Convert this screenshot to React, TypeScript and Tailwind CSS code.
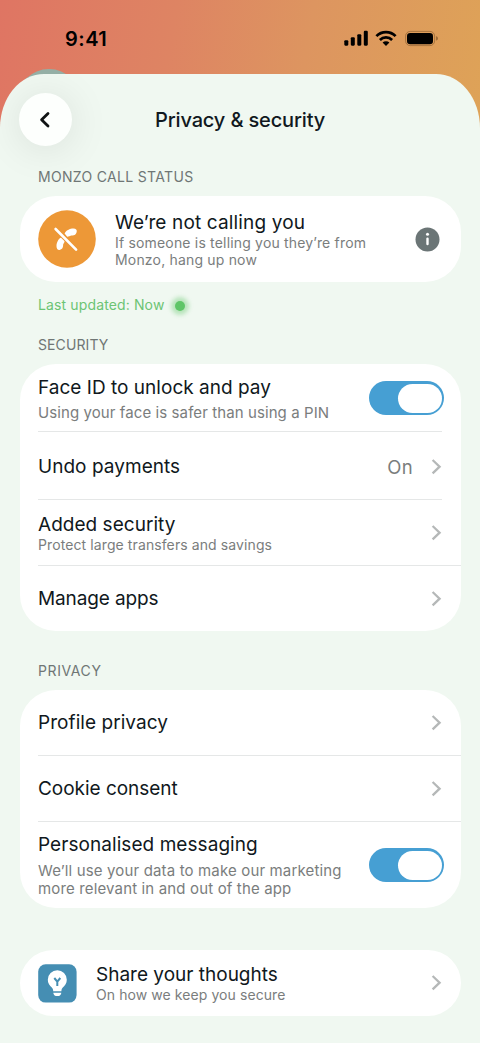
import type { ReactNode } from 'react'

const TITLE = 'text-[19px] text-[#101820] whitespace-nowrap'
const SUB = 'text-[#7a7d7d] whitespace-nowrap'

function StatusBar() {
  return (
    <div className="flex h-[74px] items-start justify-between pl-[65px] pr-[41px] text-black">
      <span className="mt-[26px] text-[20px] font-semibold leading-[26px] tracking-[0.5px]">9:41</span>
      <div className="mt-[30px] flex items-center">
        <svg width="25" height="17" viewBox="0 0 25 17" fill="currentColor">
          <rect x="0.3" y="10.2" width="4" height="5.5" rx="1.1" />
          <rect x="6.8" y="7.2" width="4" height="8.5" rx="1.1" />
          <rect x="13.3" y="4.2" width="4" height="11.5" rx="1.1" />
          <rect x="19.8" y="0.8" width="4" height="14.9" rx="1.1" />
        </svg>
        <svg className="ml-[6px]" width="22" height="17" viewBox="0 0 22 17" fill="none" stroke="currentColor" strokeWidth="2.7">
          <path d="M1.4 6.1A13.4 13.4 0 0 1 20.6 6.1" />
          <path d="M4.9 10A8.6 8.6 0 0 1 17.1 10" />
          <path d="M11 16 7.6 12.6A4.8 4.8 0 0 1 14.4 12.6Z" fill="currentColor" stroke="none" />
        </svg>
        <svg className="ml-[8px]" width="34" height="17" viewBox="0 0 34 17">
          <rect x="0.6" y="1.4" width="29" height="14.2" rx="4.6" fill="none" stroke="#5a3a18" strokeOpacity=".4" />
          <rect x="2" y="3" width="26" height="11.2" rx="3.2" fill="currentColor" />
          <path d="M31.2 6.3v4.2c1.2-.4 1.6-1.2 1.6-2.1s-.4-1.7-1.6-2.1Z" fill="#5a3a18" fillOpacity=".6" />
        </svg>
      </div>
    </div>
  )
}

function SectionLabel({ className, children }: { className: string; children: ReactNode }) {
  return <h2 className={`pl-[38px] text-[14px] leading-5 text-[#6f7675] ${className}`}>{children}</h2>
}

function Card({ className, children }: { className: string; children: ReactNode }) {
  return <div className={`ml-5 w-[441px] overflow-hidden rounded-[36px] bg-white pl-[18px] ${className}`}>{children}</div>
}

function Chevron() {
  return (
    <svg className="shrink-0" width="12" height="18" viewBox="0 0 12 18" fill="none" stroke="#b5b8b8" strokeWidth="2.3">
      <path d="m2.6 2 7 6.7-7 6.7" />
    </svg>
  )
}

function Toggle({ className }: { className: string }) {
  return (
    <button role="switch" aria-checked="true" className={`flex h-[34px] w-[75px] shrink-0 justify-end rounded-full bg-[#469fd3] p-[2.5px] ${className}`}>
      <span className="h-[29px] w-[44px] rounded-full bg-white" />
    </button>
  )
}

interface LinkRowProps {
  title: string
  tracking: string
  className: string
  value?: string
}

function LinkRow({ title, tracking, className, value }: LinkRowProps) {
  return (
    <div className={`flex items-center border-[#e5e7e7] ${className}`}>
      <span className={`flex-1 leading-6 ${TITLE} ${tracking}`}>{title}</span>
      {value && <span className="mr-[17px] text-[18.5px] leading-6 tracking-[0.3px] text-[#7a7d7d]">{value}</span>}
      <Chevron />
    </div>
  )
}

export default function App() {
  return (
    <div className="h-[1043px] w-[480px] overflow-hidden bg-[linear-gradient(100deg,#df7563_0%,#de8463_35%,#dd9560_62%,#dea357_100%)] bg-[length:480px_160px] bg-no-repeat font-['Inter',sans-serif]">
      <div className="relative">
        <StatusBar />
        <div className="absolute left-[17px] top-[69px] h-16 w-16 rounded-full bg-[#94afa5]" />
      </div>
      <main className="relative h-[969px] overflow-hidden rounded-t-[44px_54px] bg-[#f0f8f1]">
        <header className="flex h-[91px] items-start pl-[19px] pt-[19px]">
          <button aria-label="Back" className="flex h-[53px] w-[53px] items-center justify-center rounded-full bg-[#fdfffd] shadow-[0_3px_40px_rgba(0,0,0,0.1)]">
            <svg className="mr-[2px]" width="14" height="18" viewBox="0 0 14 18" fill="none" stroke="#101414" strokeWidth="2.8" strokeLinecap="round" strokeLinejoin="round">
              <path d="M10 2.5 3.6 8.8l6.4 6.3" />
            </svg>
          </button>
          <h1 className="ml-[83px] mt-[14px] whitespace-nowrap text-[20px] font-medium leading-[26px] tracking-[-0.15px] text-[#101820]">Privacy &amp; security</h1>
        </header>

        <SectionLabel className="mt-[2px] tracking-[0.32px]">MONZO CALL STATUS</SectionLabel>
        <Card className="mt-[9px] flex h-[86px] items-center">
          <svg className="shrink-0" width="58" height="58" viewBox="0 0 58 58">
            <circle cx="29" cy="29" r="28.8" fill="#ed9837" />
            <path d="M26.600 23.600c1.200-3 5.200-5 8.900-5 2.400 0 3.700 1.500 3.200 3.400-.6 2.300-2.400 3.700-4.500 3.600-1.300 0-2 .2-2.800.7l-2.200.5Z" fill="#fff" />
            <path d="M23.200 27.600c-2.800 1.200-4.700 5.200-4.700 8.700 0 2.600 1.300 4 3.100 3.700 2.200-.4 3.600-2.200 3.500-4.400 0-1.300.3-2 .9-2.700l.8-1.900Z" fill="#fff" />
            <path d="m17.600 19 20.500 20.700" stroke="#ed9837" strokeWidth="4.6" />
            <path d="m17.600 19 20.500 20.700" stroke="#fff" strokeWidth="2.6" strokeLinecap="round" />
          </svg>
          <div className="ml-[19px] w-[300px]">
            <p className={`${TITLE} pt-px leading-[23px] tracking-[0.15px]`}>We’re not calling you</p>
            <p className={`${SUB} text-[14px] leading-[17px] tracking-[0.18px]`}>If someone is telling you they’re from<br />Monzo, hang up now</p>
          </div>
          <svg className="shrink-0" width="25" height="25" viewBox="0 0 25 25">
            <circle cx="12.5" cy="12.5" r="12" fill="#6b7576" />
            <circle cx="12.5" cy="7.3" r="1.5" fill="#fff" />
            <rect x="11.3" y="10.6" width="2.4" height="7.6" rx="1.2" fill="#fff" />
          </svg>
        </Card>
        <div className="mt-[13px] flex h-5 items-center pl-[38px]">
          <span className="text-[14px] leading-5 tracking-[0.13px] text-[#6cc474]">Last updated: Now</span>
          <span className="ml-[11px] mt-[2px] h-[10px] w-[10px] rounded-full bg-[#5ec567] shadow-[0_0_4px_4px_rgba(94,197,103,0.4)]" />
        </div>

        <SectionLabel className="mt-[20px] tracking-[0.1px]">SECURITY</SectionLabel>
        <Card className="mt-[9px] h-[267px]">
          <div className="mr-[19px] flex h-[68px] border-b border-[#e5e7e7]">
            <div className="w-[331px] shrink-0 pt-[12px]">
              <p className={`${TITLE} leading-6 tracking-[0.02px]`}>Face ID to unlock and pay</p>
              <p className={`${SUB} mt-[4px] text-[15px] leading-[17px] tracking-[0.09px]`}>Using your face is safer than using a PIN</p>
            </div>
            <Toggle className="mt-[17px]" />
          </div>
          <LinkRow title="Undo payments" tracking="tracking-[0.04px]" className="mr-[19px] h-[68px] border-b pt-[2px]" value="On" />
          <div className="flex h-[66px] items-center border-b border-[#e5e7e7] pr-[19px]">
            <div className="flex-1">
              <p className={`${TITLE} leading-[23px] tracking-[0.03px]`}>Added security</p>
              <p className={`${SUB} text-[14px] leading-[17px] tracking-[0.1px]`}>Protect large transfers and savings</p>
            </div>
            <Chevron />
          </div>
          <LinkRow title="Manage apps" tracking="tracking-[-0.12px]" className="h-[65px] pr-[19px] pt-px" />
        </Card>

        <SectionLabel className="mt-[30px] tracking-[0.6px]">PRIVACY</SectionLabel>
        <Card className="mt-[9px] h-[218px]">
          <LinkRow title="Profile privacy" tracking="tracking-[0.06px]" className="h-[66px] border-b pr-[19px] pt-px" />
          <LinkRow title="Cookie consent" tracking="tracking-[-0.03px]" className="h-[66px] border-b pr-[19px] pt-px" />
          <div className="flex">
            <div className="w-[331px] shrink-0 pt-[11px]">
              <p className={`${TITLE} leading-6 tracking-[0.06px]`}>Personalised messaging</p>
              <p className={`${SUB} mt-[5px] text-[15px] leading-[18px] tracking-[0.15px]`}>We’ll use your data to make our marketing<br />more relevant in and out of the app</p>
            </div>
            <Toggle className="mt-[26px]" />
          </div>
        </Card>

        <Card className="mt-[42px] flex h-[66px] items-center pr-[19px]">
          <svg className="shrink-0" width="39" height="39" viewBox="0 0 39 39">
            <rect x="0.2" y="0.2" width="38.4" height="38.4" rx="7.5" fill="#458eb3" />
            <path d="M19.3 6.2a9.500 9.500 0 0 0-9.500 9.500c0 3.600 1.900 6 4 7.800.8.7 1.200 1.500 1.300 2.500l.1 1.300h8.200l.1-1.300c.1-1 .5-1.800 1.300-2.500 2.100-1.800 4-4.200 4-7.800a9.500 9.500 0 0 0-9.500-9.500Z" fill="#fff" />
            <path d="M15.300 28.700h8c-.2 2-1.300 3.200-2.700 3.200H18c-1.400 0-2.500-1.200-2.700-3.200Z" fill="#fff" />
            <path d="m16.300 14 3 3.600 3-3.600M19.300 17.600v4.500" fill="none" stroke="#458eb3" strokeWidth="2" />
          </svg>
          <div className="ml-[19px] flex-1">
            <p className={`${TITLE} leading-[23px]`}>Share your thoughts</p>
            <p className={`${SUB} text-[14px] leading-[17px] tracking-[0.08px]`}>On how we keep you secure</p>
          </div>
          <Chevron />
        </Card>
      </main>
    </div>
  )
}
